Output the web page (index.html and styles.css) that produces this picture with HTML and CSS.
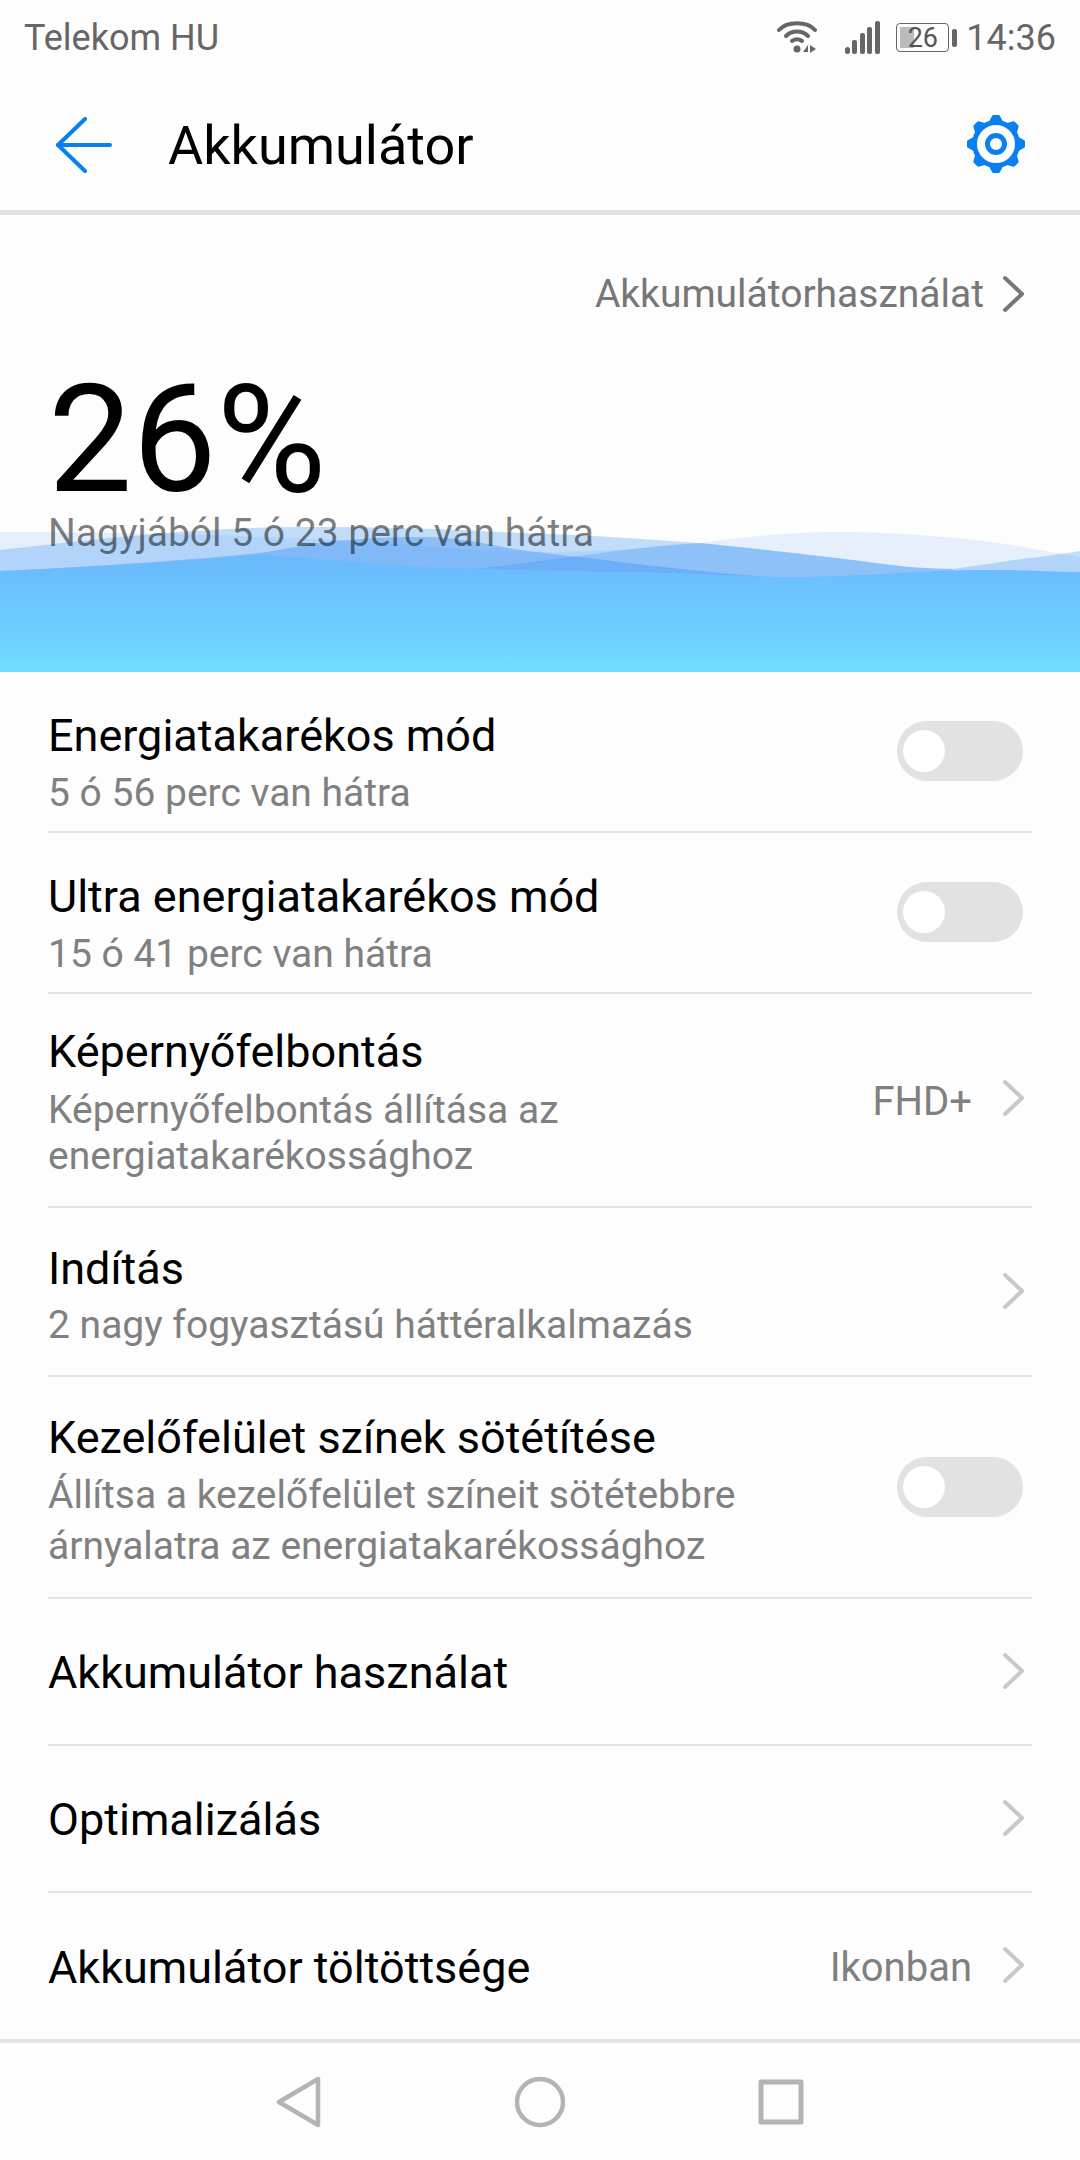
FILE: index.html
```html
<!DOCTYPE html>
<html lang="hu">
<head>
    <meta charset="UTF-8">
    <meta name="viewport" content="width=device-width, initial-scale=1.0">
    <title>Akkumulátor</title>
    <link rel="stylesheet" href="styles.css">
</head>
<body>
    <div class="statusbar">
        <span class="carrier">Telekom HU</span>
        <div class="status-icons">
            <svg class="wifi" width="40" height="33" viewBox="0 0 40 33" fill="none" stroke="#666" stroke-width="4" stroke-linecap="round">
                <path d="M2 9C10 0 30 0 38 9"/>
                <path d="M9 15C15 9 25 9 31 15"/>
                <path d="M15 20C18 18 22 18 25 20"/>
                <circle cx="20" cy="28" r="3.500" fill="#666" stroke="none"/>
                <path d="M31 24L26 31H31ZM33 24V32L39 28Z" fill="#666" stroke="none"/>
            </svg>
            <svg class="signal" width="35" height="33" viewBox="0 0 35 33" fill="#666">
                <rect x="0" y="26" width="5" height="7" rx="2.500"/>
                <rect x="7" y="19" width="5" height="14" rx="2"/>
                <rect x="15" y="12" width="5" height="21" rx="2"/>
                <rect x="22" y="6" width="5" height="27" rx="2"/>
                <rect x="30" y="0" width="5" height="33" rx="2"/>
            </svg>
            <div class="battery">
                <div class="battery-body">
                    <div class="battery-fill"></div>
                    <span class="battery-text">26</span>
                </div>
                <div class="battery-tip"></div>
            </div>
            <span class="clock">14:36</span>
        </div>
    </div>

    <div class="toolbar">
        <svg class="back" width="56" height="56" viewBox="0 0 56 56" fill="none" stroke="#0a7ff0" stroke-width="4" stroke-linecap="round" stroke-linejoin="round">
            <path d="M29 2L2 28L29 54"/>
            <path d="M2 28H54"/>
        </svg>
        <h1 class="title">Akkumulátor</h1>
        <svg class="gear" width="60" height="60" viewBox="-30 -30 60 60" fill="none" stroke="#0a7ff0">
            <defs>
                <path id="tooth" d="M-5.500 -22L-2.500 -27.500H2.500L5.500 -22Z" fill="#0a7ff0" stroke-width="3" stroke-linejoin="round"/>
            </defs>
            <circle r="21.500" stroke-width="5"/>
            <circle r="8.500" stroke-width="5"/>
            <use href="#tooth"/>
            <use href="#tooth" transform="rotate(45)"/>
            <use href="#tooth" transform="rotate(90)"/>
            <use href="#tooth" transform="rotate(135)"/>
            <use href="#tooth" transform="rotate(180)"/>
            <use href="#tooth" transform="rotate(225)"/>
            <use href="#tooth" transform="rotate(270)"/>
            <use href="#tooth" transform="rotate(315)"/>
        </svg>
    </div>

    <div class="hero">
        <svg class="waves" width="1080" height="172" viewBox="0 500 1080 172">
            <defs>
                <linearGradient id="sea" gradientUnits="userSpaceOnUse" x1="0" y1="555" x2="0" y2="672">
                    <stop offset="0" stop-color="#6ab8fe"/>
                    <stop offset="1" stop-color="#70dcff"/>
                </linearGradient>
            </defs>
            <!-- back to front -->
            <path d="M0 532C120 532 300 535 450 548C560 556 620 550 700 543C760 535 800 532 837 532C900 532 980 538 1040 550L1080 557V672H0Z" fill="#3d94f5" fill-opacity=".12"/>
            <path d="M0 550C90 540 200 527 300 527C380 527 450 529 520 533C590 535 640 539 700 543C760 549 810 555 853 560C890 565 920 569 953 569C985 565 1010 560 1040 557L1080 551V672H0Z" fill="#3d94f5" fill-opacity=".3"/>
            <path d="M450 571C520 565 600 552 670 545L700 543C760 549 810 555 853 560C890 565 920 569 953 569V672H450Z" fill="#3d94f5" fill-opacity=".3"/>
            <path d="M0 571C100 566 190 560 260 553C300 547 320 541 350 540C380 537 400 537 430 537C470 539 490 545 520 550C560 555 590 558 620 562C670 568 730 574 780 578V672H0Z" fill="#3d94f5" fill-opacity=".42"/>
            <path d="M0 571C100 568 190 560 260 555C300 557 330 560 367 563C420 567 470 569 520 570C580 571 640 572 700 574C740 576 770 577 803 577C850 576 880 574 920 572C950 570 980 570 1000 570C1030 570 1050 572 1080 572V672H0Z" fill="url(#sea)"/>
        </svg>
        <div class="usage-link">
            <span>Akkumulátorhasználat</span>
            <svg class="chevron chevron-dark" width="24" height="38" viewBox="0 0 24 38"><path d="M3 3L20 19L3 35"/></svg>
        </div>
        <div class="percent">26%</div>
        <div class="remaining">Nagyjából 5 ó 23 perc van hátra</div>
    </div>

    <div class="settings">
        <div class="row row-mode">
            <div class="row-text">
                <div class="row-title">Energiatakarékos mód</div>
                <div class="row-sub">5 ó 56 perc van hátra</div>
            </div>
            <div class="toggle"><div class="knob"></div></div>
        </div>
        <div class="row row-mode">
            <div class="row-text">
                <div class="row-title">Ultra energiatakarékos mód</div>
                <div class="row-sub">15 ó 41 perc van hátra</div>
            </div>
            <div class="toggle"><div class="knob"></div></div>
        </div>
        <div class="row row-res">
            <div class="row-text">
                <div class="row-title">Képernyőfelbontás</div>
                <div class="row-sub">Képernyőfelbontás állítása az<br>energiatakarékossághoz</div>
            </div>
            <div class="row-value">FHD+</div>
            <svg class="chevron" width="24" height="38" viewBox="0 0 24 38"><path d="M3 3L20 19L3 35"/></svg>
        </div>
        <div class="row row-start">
            <div class="row-text">
                <div class="row-title">Indítás</div>
                <div class="row-sub">2 nagy fogyasztású háttéralkalmazás</div>
            </div>
            <svg class="chevron" width="24" height="38" viewBox="0 0 24 38"><path d="M3 3L20 19L3 35"/></svg>
        </div>
        <div class="row row-dark">
            <div class="row-text">
                <div class="row-title">Kezelőfelület színek sötétítése</div>
                <div class="row-sub">Állítsa a kezelőfelület színeit sötétebbre<br>árnyalatra az energiatakarékossághoz</div>
            </div>
            <div class="toggle"><div class="knob"></div></div>
        </div>
        <div class="row row-plain">
            <div class="row-text"><div class="row-title">Akkumulátor használat</div></div>
            <svg class="chevron" width="24" height="38" viewBox="0 0 24 38"><path d="M3 3L20 19L3 35"/></svg>
        </div>
        <div class="row row-plain">
            <div class="row-text"><div class="row-title">Optimalizálás</div></div>
            <svg class="chevron" width="24" height="38" viewBox="0 0 24 38"><path d="M3 3L20 19L3 35"/></svg>
        </div>
        <div class="row row-plain row-last">
            <div class="row-text"><div class="row-title">Akkumulátor töltöttsége</div></div>
            <div class="row-value">Ikonban</div>
            <svg class="chevron" width="24" height="38" viewBox="0 0 24 38"><path d="M3 3L20 19L3 35"/></svg>
        </div>
    </div>

    <div class="navbar">
        <svg width="46" height="52" viewBox="0 0 46 52" fill="none" stroke="#b4b4b4" stroke-width="4.500" stroke-linejoin="round"><path d="M42 3V49L3 26Z"/></svg>
        <svg width="50" height="52" viewBox="0 0 50 52" fill="none" stroke="#b4b4b4" stroke-width="4.500"><circle cx="25" cy="26" r="23"/></svg>
        <svg width="46" height="46" viewBox="0 0 46 46" fill="none" stroke="#b4b4b4" stroke-width="5" stroke-linejoin="round"><rect x="3" y="3" width="40" height="40"/></svg>
    </div>
</body>
</html>
```

FILE: styles.css
```css
html, body {
    margin: 0;
    padding: 0;
}

body {
    width: 1080px;
    height: 2160px;
    overflow: hidden;
    background-color: #fdfdfd;
    font-family: Roboto, "Noto Sans", sans-serif;
}

.statusbar {
    height: 75px;
    padding: 0 24px;
    display: flex;
    align-items: center;
    justify-content: space-between;
    color: #666;
    font-size: 36px;
}

.status-icons {
    display: flex;
    align-items: center;
}

.wifi {
    margin-right: 28px;
}

.signal {
    margin-right: 16px;
}

.battery {
    display: flex;
    align-items: center;
    margin-right: 9px;
}

.battery-body {
    position: relative;
    width: 53px;
    height: 29px;
    box-sizing: border-box;
    border: 1px solid #666;
    border-radius: 4px;
    display: flex;
    align-items: center;
    justify-content: center;
}

.battery-fill {
    position: absolute;
    left: 3px;
    top: 3px;
    bottom: 3px;
    width: 14px;
    background-color: #bbb;
}

.battery-text {
    position: relative;
    font-size: 27px;
    color: #555;
}

.battery-tip {
    width: 5px;
    height: 18px;
    margin-left: 3px;
    border-radius: 2px;
    background-color: #666;
}

.toolbar {
    height: 135px;
    padding: 5px 54px 0 56px;
    box-sizing: border-box;
    display: flex;
    align-items: center;
}

.title {
    flex: 1;
    margin: 0 0 0 56px;
    font-size: 54px;
    font-weight: 400;
    color: #000;
}

.gear {
    margin-top: -3px;
}

.hero {
    position: relative;
    height: 457px;
    padding: 0 48px;
    border-top: 5px solid #e2e2e2;
}

.waves {
    position: absolute;
    left: 0;
    bottom: 0;
}

.usage-link {
    position: relative;
    height: 158px;
    display: flex;
    align-items: center;
    justify-content: flex-end;
    gap: 18px;
    font-size: 39px;
    color: #777;
}

.percent {
    position: relative;
    margin-top: 2px;
    font-size: 150px;
    line-height: 130px;
    color: #000;
}

.remaining {
    position: relative;
    margin-top: 5px;
    font-size: 39px;
    color: rgba(0, 0, 0, 0.52);
}

.settings {
    padding: 0 48px;
}

.row {
    display: flex;
    align-items: center;
    border-bottom: 2px solid #e4e4e4;
    box-sizing: border-box;
}

.row-mode {
    height: 161px;
}

.row-mode .row-text {
    padding-top: 23px;
}

.row-mode .row-sub {
    margin-top: 7px;
}

.row-mode .toggle {
    margin-bottom: 2px;
}

.row-res {
    height: 214px;
}

.row-res .row-text {
    padding-top: 3px;
}

.row-res .row-sub {
    margin-top: 9px;
    line-height: 46px;
}

.row-res .chevron {
    margin-bottom: 4px;
}

.row-start {
    height: 169px;
}

.row-start .row-text {
    padding-top: 8px;
}

.row-dark {
    height: 222px;
}

.row-dark .row-text {
    padding-top: 8px;
}

.row-dark .row-sub {
    line-height: 51px;
}

.row-plain {
    height: 147px;
}

.row-plain .row-text {
    padding-top: 2px;
}

.row-last {
    height: 146px;
    border-bottom: none;
}

.row-text {
    flex: 1;
}

.row-title {
    font-size: 45px;
    color: #000;
}

.row-sub {
    margin-top: 6px;
    font-size: 39px;
    line-height: 48px;
    color: #808080;
}

.row-value {
    margin-right: 30px;
    padding-top: 3px;
    font-size: 40px;
    color: #808080;
}

.chevron {
    margin-right: 6px;
    margin-bottom: 2px;
    fill: none;
    stroke: #c8c8c8;
    stroke-width: 4;
    stroke-linecap: round;
    stroke-linejoin: round;
}

.chevron-dark {
    margin-bottom: 0;
    stroke: #777;
}

.toggle {
    width: 126px;
    height: 60px;
    margin-right: 9px;
    padding: 9px 6px;
    box-sizing: border-box;
    border-radius: 30px;
    background-color: #e2e2e2;
}

.knob {
    width: 42px;
    height: 42px;
    border-radius: 50%;
    background-color: #fff;
}

.navbar {
    height: 118px;
    padding-left: 276px;
    border-top: 4px solid #e4e4e4;
    display: flex;
    align-items: center;
    gap: 193px;
}
```
